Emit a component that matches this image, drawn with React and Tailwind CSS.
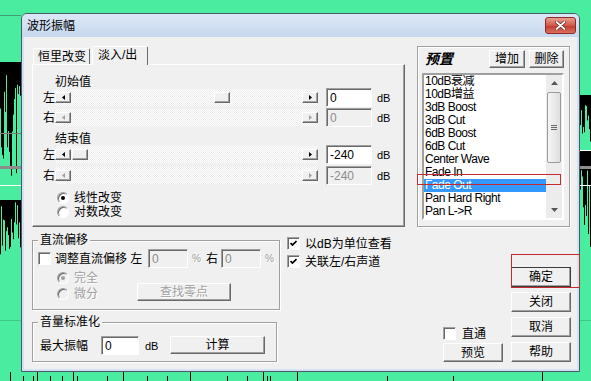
import React from 'react'

const raised = 'bg-[#f0f0f0] border border-t-white border-l-white border-r-[#696969] border-b-[#696969] shadow-[inset_-1px_-1px_0_#a0a0a0]'
const sunken = 'border border-t-[#a0a0a0] border-l-[#a0a0a0] border-r-white border-b-white shadow-[inset_1px_1px_0_#696969]'
const dim = 'text-[#a0a0a0] [text-shadow:1px_1px_0_#ffffff]'

const presets = [
  '10dB衰减', '10dB增益', '3dB Boost', '3dB Cut', '6dB Boost', '6dB Cut',
  'Center Wave', 'Fade In', 'Fade Out', 'Pan Hard Right', 'Pan L->R', 'Pan R->L',
]

function seeded(seed) {
  let s = seed
  return () => {
    s = (s * 9301 + 49297) % 233280
    return s / 233280
  }
}

function Backdrop() {
  const r = seeded(11)
  const spikes = []
  // left strip of the wave view
  for (let x = 0; x < 21; x++) {
    const h = 20 + r() * 110
    spikes.push(<line key={'lg' + x} x1={x + 0.5} x2={x + 0.5} y1={200} y2={200 - h} stroke="#4aeca0" />)
    const d = r() * 60
    spikes.push(<line key={'lb' + x} x1={x + 0.5} x2={x + 0.5} y1={200} y2={200 + d} stroke="#000" />)
  }
  // right strip
  for (let x = 580; x < 591; x++) {
    const d = r() * 50
    spikes.push(<line key={'rb' + x} x1={x + 0.5} x2={x + 0.5} y1={95} y2={95 + d} stroke="#000" />)
    const h = 30 + r() * 90
    spikes.push(<line key={'rg' + x} x1={x + 0.5} x2={x + 0.5} y1={280} y2={280 - h} stroke="#4aeca0" />)
  }
  const ticks = [10, 23, 33, 37, 50, 62, 73, 77, 107, 123, 147, 167, 190, 227, 247, 263, 267, 270, 297, 387, 453, 542]
  return (
    <svg className="absolute inset-0" width="591" height="381" viewBox="0 0 591 381">
      <line x1="0" x2="21" y1="15.5" y2="15.5" stroke="#3d9d70" />
      <rect x="0" y="62" width="21" height="138" fill="#000" />
      <rect x="580" y="150" width="11" height="130" fill="#000" />
      {spikes}
      <rect x="0" y="133" width="21" height="1" fill="#7a7a7a" />
      <rect x="0" y="166" width="21" height="3" fill="#8c8c8c" />
      <rect x="0" y="185" width="21" height="1" fill="#ffffff" />
      <rect x="580" y="150" width="11" height="1" fill="#ffffff" />
      <rect x="580" y="166" width="11" height="3" fill="#8c8c8c" />
      <rect x="580" y="185" width="11" height="1" fill="#ffffff" />
      <rect x="0" y="320" width="21" height="1" fill="#3fc78a" />
      <rect x="580" y="320" width="11" height="1" fill="#3fc78a" />
      {ticks.map((x, i) => (
        <line key={x} x1={x + 0.5} x2={x + 0.5} y1={381} y2={i % 3 === 0 ? 372 : 376} stroke="#000" />
      ))}
    </svg>
  )
}

function Arrow({ dir, disabled }) {
  return (
    <div className={`${raised} w-[16px] h-[11px] flex items-center justify-center shrink-0`}>
      <svg width="3" height="5" viewBox="0 0 3 5">
        <path d={dir === 'left' ? 'M3 0v5L0 2.5z' : 'M0 0v5l3-2.5z'} fill={disabled ? '#a0a0a0' : '#000'} />
      </svg>
    </div>
  )
}

function Track({ thumb, disabled }) {
  return (
    <div className="w-[263px] h-[17px] flex items-center bg-[image:repeating-conic-gradient(#ffffff_0_25%,#ebebeb_0_50%)] bg-[length:2px_2px]">
      <Arrow dir="left" disabled={disabled} />
      <div className="flex-1 flex h-[11px]">
        {thumb && <div className={`${raised} w-[16px] h-[11px] ${thumb}`} />}
      </div>
      <Arrow dir="right" disabled={disabled} />
    </div>
  )
}

function Edit({ value, className = '', disabled }) {
  return (
    <div className={`${sunken} h-[19px] pl-[3px] flex items-center leading-[12px] ${disabled ? 'bg-[#f0f0f0] text-[#8c8c8c]' : 'bg-white'} ${className}`}>
      {value}
    </div>
  )
}

function Check({ checked }) {
  return (
    <div className={`${sunken} w-[13px] h-[13px] bg-white flex items-center justify-center shrink-0`}>
      {checked && (
        <svg width="7" height="7" viewBox="0 0 7 7">
          <path d="M0.5 3l2 2L6.5 1" stroke="#000" strokeWidth="1.7" fill="none" />
        </svg>
      )}
    </div>
  )
}

function Radio({ checked, disabled }) {
  return (
    <div className={`w-[12px] h-[12px] rounded-full border border-t-[#a0a0a0] border-l-[#a0a0a0] border-r-white border-b-white shadow-[inset_1px_1px_0_#696969] flex items-center justify-center shrink-0 ${disabled ? 'bg-[#f0f0f0]' : 'bg-white'}`}>
      {checked && <div className={`w-[4px] h-[4px] rounded-full ${disabled ? 'bg-[#a0a0a0]' : 'bg-black'}`} />}
    </div>
  )
}

function Btn({ children, className = '', disabled }) {
  return (
    <button type="button" className={`${raised} flex items-center justify-center leading-[12px] ${disabled ? dim : ''} ${className}`}>
      {children}
    </button>
  )
}

function SliderRow({ side, thumb, value, disabled }) {
  return (
    <div className="flex items-center h-[19px]">
      <span className="w-[12px] leading-[12px]">{side}</span>
      <Track thumb={thumb} disabled={disabled} />
      <Edit value={value} disabled={disabled} className="ml-[8px] w-[46px]" />
      <span className="ml-[5px] text-[11px] leading-[12px]">dB</span>
    </div>
  )
}

function FadePanel() {
  return (
    <div className="w-[373px] flex flex-col">
      <div className="flex items-end h-[18px] pl-[1px]">
        <div className="h-[16px] w-[57px] border-t border-l border-r border-t-white border-l-white border-r-[#696969] rounded-t-[2px] pl-[4px] flex items-center leading-[12px]">
          恒里改变
        </div>
        <div className="relative z-10 h-[19px] mb-[-1px] ml-[2px] w-[56px] bg-[#f0f0f0] border-t border-l border-r border-t-white border-l-white border-r-[#696969] rounded-t-[2px] pl-[5px] pb-[3px] flex items-center leading-[12px]">
          淡入/出
        </div>
      </div>
      <div className="h-[163px] border border-t-white border-l-white border-r-[#696969] border-b-[#696969] shadow-[inset_-1px_-1px_0_#a0a0a0] pl-[10px] pt-[11px] flex flex-col">
        <div className="pl-[12px] h-[12px] leading-[12px]">初始值</div>
        <SliderRow side="左" thumb="ml-[143px]" value="0" />
        <div className="mt-[1px]">
          <SliderRow side="右" value="0" disabled />
        </div>
        <div className="pl-[12px] mt-[6px] h-[12px] leading-[12px]">结束值</div>
        <SliderRow side="左" thumb="ml-[1px]" value="-240" />
        <div className="mt-[2px]">
          <SliderRow side="右" value="-240" disabled />
        </div>
        <div className="mt-[6px] pl-[14px] flex flex-col gap-[1px]">
          <div className="h-[13px] flex items-center gap-[5px] leading-[12px]">
            <Radio checked />
            <span>线性改变</span>
          </div>
          <div className="h-[13px] flex items-center gap-[5px] leading-[12px]">
            <Radio />
            <span>对数改变</span>
          </div>
        </div>
      </div>
    </div>
  )
}

function PresetGroup() {
  return (
    <div className="ml-[12px] w-[153px] h-[181px] border border-[#a0a0a0] shadow-[inset_1px_1px_0_#ffffff,1px_1px_0_#ffffff] pl-[4px] pr-[5px] pt-[3px] flex flex-col">
      <div className="h-[18px] flex items-center">
        <span className="ml-[3px] text-[14px] leading-[14px] font-bold italic">预置</span>
        <Btn className="ml-auto w-[36px] h-[18px]">增加</Btn>
        <Btn className="ml-[4px] w-[35px] h-[18px]">删除</Btn>
      </div>
      <div className="mt-[5px] h-[147px] w-[142px] border-2 border-t-[#a0a0a0] border-l-[#a0a0a0] border-r-white border-b-white bg-white flex overflow-hidden">
        <div className="w-[122px] flex flex-col overflow-hidden">
          {presets.map((p) => (
            <div
              key={p}
              className={`h-[13px] shrink-0 pl-[1px] text-[12px] leading-[13px] tracking-[-0.5px] whitespace-nowrap ${p === 'Fade Out' ? 'bg-[#3399ff] text-white' : ''}`}
            >
              {p}
            </div>
          ))}
        </div>
        <div className="flex-1 bg-[#ececec] flex flex-col items-center">
          <div className="h-[16px] flex items-center justify-center">
            <svg width="7" height="4" viewBox="0 0 7 4"><path d="M0 4L3.5 0L7 4z" fill="#555" /></svg>
          </div>
          <div className="mt-[1px] w-[14px] h-[71px] rounded-[2px] border border-[#9b9b9b] bg-[linear-gradient(90deg,#f6f6f6,#dedede)] flex flex-col items-center justify-center gap-[1px]">
            <div className="w-[6px] h-[1px] bg-[#666]" />
            <div className="w-[6px] h-[1px] bg-[#666]" />
            <div className="w-[6px] h-[1px] bg-[#666]" />
          </div>
          <div className="mt-auto h-[16px] flex items-center justify-center">
            <svg width="7" height="4" viewBox="0 0 7 4"><path d="M0 0L3.5 4L7 0z" fill="#555" /></svg>
          </div>
        </div>
      </div>
    </div>
  )
}

function DcGroup() {
  return (
    <fieldset className="mt-[7px] border border-[#a0a0a0] shadow-[inset_1px_1px_0_#ffffff,1px_1px_0_#ffffff] px-[5px] pt-[3px] pb-[7px]">
      <legend className="px-[2px] leading-[12px] bg-[#f0f0f0]">直流偏移</legend>
      <div className="h-[19px] flex items-center leading-[12px]">
        <Check />
        <span className="ml-[4px] w-[93px] whitespace-pre">调整直流偏移 左</span>
        <Edit value="0" disabled className="w-[40px]" />
        <span className={`ml-[4px] w-[14px] text-[10px] ${dim}`}>%</span>
        <span className="w-[15px]">右</span>
        <Edit value="0" disabled className="w-[40px]" />
        <span className={`ml-[4px] text-[10px] ${dim}`}>%</span>
      </div>
      <div className="flex items-end">
        <div className="w-[99px] pl-[19px] pt-[2px] flex flex-col">
          <div className="h-[16px] flex items-center gap-[5px] leading-[12px]">
            <Radio checked disabled />
            <span className={dim}>完全</span>
          </div>
          <div className="h-[16px] flex items-center gap-[5px] leading-[12px]">
            <Radio disabled />
            <span className={dim}>微分</span>
          </div>
        </div>
        <Btn disabled className="w-[94px] h-[18px] mb-[1px]">查找零点</Btn>
      </div>
    </fieldset>
  )
}

function NormalizeGroup() {
  return (
    <fieldset className="mt-[6px] border border-[#a0a0a0] shadow-[inset_1px_1px_0_#ffffff,1px_1px_0_#ffffff] px-[5px] pt-[8px] pb-[6px]">
      <legend className="px-[2px] leading-[12px] bg-[#f0f0f0]">音量标准化</legend>
      <div className="h-[19px] flex items-center leading-[12px]">
        <span className="w-[63px] pl-[2px]">最大振幅</span>
        <Edit value="0" className="w-[38px]" />
        <span className="ml-[6px] w-[25px] text-[11px]">dB</span>
        <Btn className="w-[95px] h-[18px] self-start">计算</Btn>
      </div>
    </fieldset>
  )
}

export default function App() {
  return (
    <div className="relative w-[591px] h-[381px] overflow-hidden bg-[#4aeca0] text-[12px] text-black font-[family-name:'Liberation_Sans','Noto_Sans_CJK_SC',sans-serif]">
      <Backdrop />
      <div className="relative pl-[21px] pt-[13px]">
        <div className="w-[559px] h-[359px] border border-[#4a5868] rounded-t-[6px] bg-[#d2e1f3] flex flex-col px-[2px] pb-[2px]">
          <div className="h-[23px] mx-[-2px] rounded-t-[5px] bg-[linear-gradient(#dce8f6,#c6d8ee)] flex items-center pl-[5px] pr-[3px]">
            <span className="leading-[12px]">波形振幅</span>
            <div className="ml-auto w-[31px] h-[17px] rounded-[3px] border border-[#8a2a22] bg-[linear-gradient(#e8a093,#d2574a_50%,#c2392c_51%,#d8705f)] flex items-center justify-center">
              <svg width="11" height="9" viewBox="0 0 11 9">
                <path d="M1.5 1l8 7M9.5 1l-8 7" stroke="#6b1d16" strokeWidth="3.2" strokeLinecap="round" />
                <path d="M1.5 1l8 7M9.5 1l-8 7" stroke="#ffffff" strokeWidth="1.8" strokeLinecap="round" />
              </svg>
            </div>
          </div>
          <div className="flex-1 bg-[#f0f0f0] pl-[8px] pt-[9px] flex flex-col">
            <div className="flex">
              <FadePanel />
              <PresetGroup />
            </div>
            <div className="h-[142px] flex">
              <div className="w-[245px] flex flex-col">
                <DcGroup />
                <NormalizeGroup />
              </div>
              <div className="w-[156px] ml-[10px] pt-[10px] flex flex-col gap-[5px] leading-[12px]">
                <div className="h-[13px] flex items-center gap-[5px]">
                  <Check checked />
                  <span>以dB为单位查看</span>
                </div>
                <div className="h-[13px] flex items-center gap-[5px]">
                  <Check checked />
                  <span>关联左/右声道</span>
                </div>
              </div>
              <div className="w-[60px] flex flex-col justify-end pb-[7px] leading-[12px]">
                <div className="h-[13px] flex items-center gap-[6px]">
                  <Check />
                  <span>直通</span>
                </div>
                <Btn className="mt-[3px] w-[60px] h-[19px]">预览</Btn>
              </div>
              <div className="w-[60px] ml-[8px] flex flex-col justify-end gap-[5px] pb-[7px]">
                <Btn className="h-[20px] outline outline-1 outline-[#3c3c3c] outline-offset-[-1px]">确定</Btn>
                <Btn className="h-[20px]">关闭</Btn>
                <Btn className="h-[20px]">取消</Btn>
                <Btn className="h-[20px]">帮助</Btn>
              </div>
            </div>
          </div>
        </div>
      </div>
      <div className="absolute left-[417px] top-[174px] w-[144px] h-[11px] border border-[#c62a2e]" />
      <div className="absolute left-[511px] top-[254px] w-[69px] h-[34px] border border-[#c62a2e]" />
    </div>
  )
}
